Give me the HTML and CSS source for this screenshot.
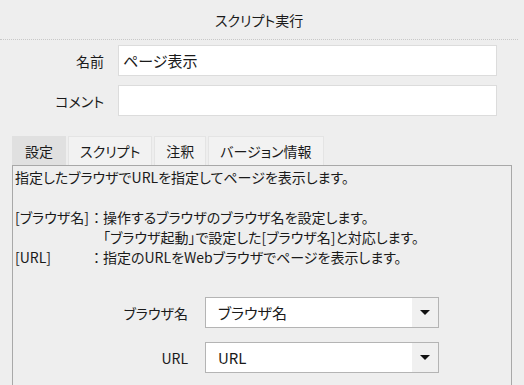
FILE: index.html
```html
<!DOCTYPE html>
<html lang="ja">
<head>
    <meta charset="UTF-8">
    <meta name="viewport" content="width=device-width, initial-scale=1.0">
    <title>スクリプト実行</title>
    <link rel="stylesheet" href="styles.css">
</head>
<body>

<div class="header">スクリプト実行</div>

<div class="fields">
    <label class="field-label" for="name">名前</label>
    <input type="text" id="name" class="field-input" value="ページ表示">
    <label class="field-label" for="comment">コメント</label>
    <input type="text" id="comment" class="field-input">
</div>

<div class="tabs">
    <div class="tab active">設定</div>
    <div class="tab">スクリプト</div>
    <div class="tab">注釈</div>
    <div class="tab">バージョン情報</div>
</div>

<div class="panel">
    <p class="summary">指定したブラウザでURLを指定してページを表示します。</p>
    <div class="params">
        <span class="key">[ブラウザ名]</span><span class="colon">：</span><span>操作するブラウザのブラウザ名を設定します。</span>
        <span class="key"></span><span class="colon"></span><span>「ブラウザ起動」で設定した[ブラウザ名]と対応します。</span>
        <span class="key">[URL]</span><span class="colon">：</span><span>指定のURLをWebブラウザでページを表示します。</span>
    </div>

    <div class="options">
        <span class="option-label">ブラウザ名</span>
        <div class="select">
            <span class="select-value">ブラウザ名</span>
            <span class="select-arrow"></span>
        </div>
        <span class="option-label">URL</span>
        <div class="select">
            <span class="select-value">URL</span>
            <span class="select-arrow"></span>
        </div>
    </div>
</div>

</body>
</html>
```

FILE: styles.css
```css
body {
    font-family: "Noto Sans CJK JP", "Noto Sans", sans-serif;
    font-feature-settings: "palt";
    font-size: 14px;
    color: #1a1a1a;
    background-color: #eeeeee;
    margin: 0;
}
.header {
    height: 40px;
    line-height: 40px;
    text-align: center;
    border-bottom: 1px dotted #c8c8c8;
    margin-right: 6px;
    box-sizing: border-box;
}
.fields {
    display: grid;
    grid-template-columns: 104px 379px;
    column-gap: 14px;
    row-gap: 9px;
    align-items: center;
    padding-top: 5px;
}
.field-label {
    text-align: right;
}
.field-input {
    height: 31px;
    box-sizing: border-box;
    border: 1px solid #dcdcdc;
    background: white;
    font-family: inherit;
    font-feature-settings: "palt";
    font-size: 15px;
    color: #1a1a1a;
    padding: 0 4px;
    margin: 0;
    outline: none;
}
.tabs {
    display: flex;
    margin: 20px 0 0 12px;
    height: 29px;
}
.tab {
    padding: 0 11px;
    line-height: 28px;
    background: #f2f2f2;
    border: 1px solid #e4e4e4;
    border-bottom: none;
    margin-right: 2px;
}
.tab.active {
    background: #e0e0e0;
    border-color: #e0e0e0;
    padding: 0 12px;
}
.panel {
    margin-left: 12px;
    width: 500px;
    height: 260px;
    box-sizing: border-box;
    border: 1px solid #a8a8a8;
    padding: 1px 2px 0 2px;
    line-height: 20px;
}
.summary {
    margin: 0 0 20px 0;
}
.params {
    display: grid;
    grid-template-columns: 78px 10px auto;
    white-space: nowrap;
}
.options {
    display: grid;
    grid-template-columns: 173px 234px;
    column-gap: 17px;
    row-gap: 14px;
    align-items: center;
    margin-top: 30px;
}
.option-label {
    text-align: right;
}
.select {
    display: flex;
    height: 31px;
    box-sizing: border-box;
    border: 1px solid #b4b4b4;
    background: white;
}
.select-value {
    flex: 1;
    padding-left: 12px;
    line-height: 29px;
    font-size: 15px;
}
.select-arrow {
    width: 26px;
    background: #f0f0f0;
    position: relative;
}
.select-arrow::after {
    content: "";
    position: absolute;
    left: 8px;
    top: 12px;
    border-left: 5px solid transparent;
    border-right: 5px solid transparent;
    border-top: 5px solid #111;
}
```
